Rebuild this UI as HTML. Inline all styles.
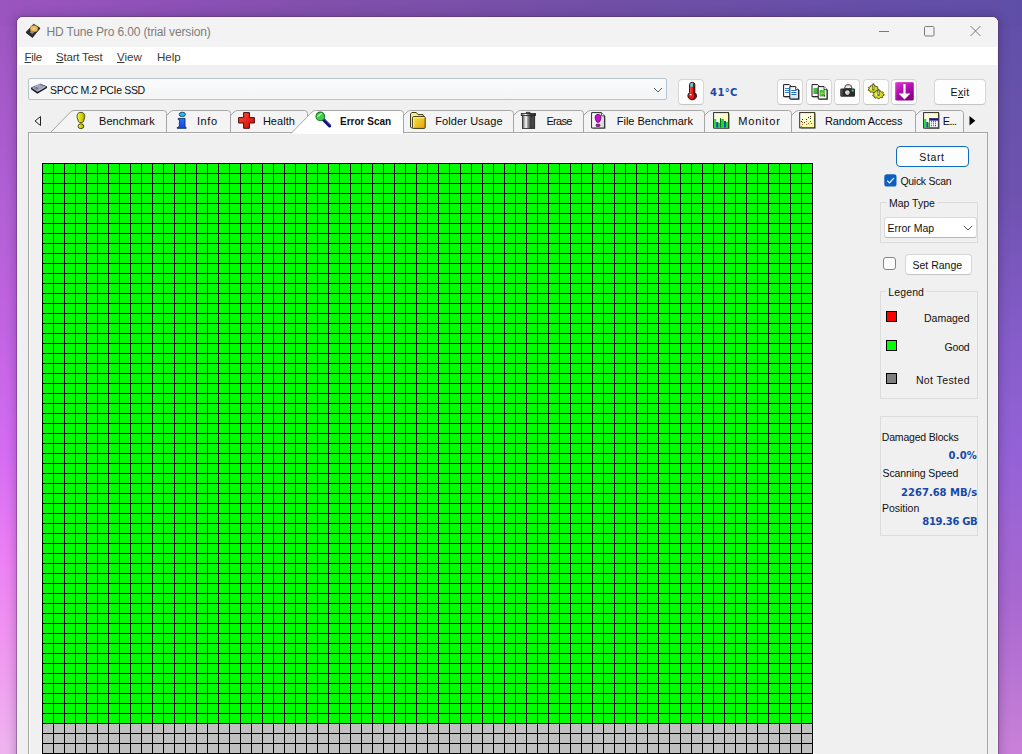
<!DOCTYPE html>
<html lang="en">
<head>
<meta charset="utf-8">
<title>HD Tune Pro 6.00 (trial version)</title>
<style>
html,body{margin:0;padding:0;}
body{width:1022px;height:754px;overflow:hidden;position:relative;font-family:"Liberation Sans",sans-serif;font-size:11px;color:#1a1a1a;
background:#a060c8;}
#bg{position:absolute;left:0;top:0;width:1022px;height:754px;}
.abs{position:absolute;}
.t{position:absolute;white-space:nowrap;line-height:14px;height:14px;}
#win{position:absolute;left:17px;top:17px;width:981px;height:760px;background:#f0f0f0;border-radius:6px 6px 0 0;
box-shadow:0 0 0 1px rgba(70,50,90,.38),0 1px 10px 2px rgba(40,20,70,.28);overflow:hidden;}
#win .in{position:absolute;left:-17px;top:-17px;width:1022px;height:754px;}
#titlebar{left:17px;top:17px;width:981px;height:30px;background:#f3f3f3;}
#menubar{left:17px;top:47px;width:981px;height:18px;background:#ffffff;}
#edge{left:17px;top:17px;width:979px;height:760px;border:1px solid #fbeefd;border-bottom:none;border-radius:6px 6px 0 0;pointer-events:none;}
u{text-decoration:underline;text-underline-offset:1px;}
.btn{position:absolute;background:#fdfdfd;border:1px solid #d6d6d6;border-bottom-color:#c4c4c4;border-radius:4px;box-sizing:border-box;}
.grp{position:absolute;border:1px solid #dcdcdc;box-sizing:border-box;}
.sw{position:absolute;width:11px;height:11px;border:1px solid #000;box-sizing:border-box;}
.blue{color:#1749a8;font-weight:bold;font-family:"DejaVu Sans","Liberation Sans",sans-serif;}
#grid{left:42px;top:163px;width:771px;height:600px;
background:
repeating-linear-gradient(to right,#000 0,#000 1px,transparent 1px,transparent 11px),
repeating-linear-gradient(to bottom,#000 0,#000 1px,transparent 1px,transparent 10px),
linear-gradient(to bottom,#00ff00 0,#00ff00 560px,#c0c0c0 560px,#c0c0c0 100%);}
</style>
</head>
<body>
<svg id="bg" width="1022" height="754" viewBox="0 0 1022 754" preserveAspectRatio="none">
<defs>
<linearGradient id="gl" x1="0" y1="0" x2="0" y2="1">
<stop offset="0" stop-color="#9b55bf"/><stop offset=".252" stop-color="#b05fd3"/><stop offset=".438" stop-color="#c264e2"/><stop offset=".597" stop-color="#d46cf2"/><stop offset=".743" stop-color="#ec80f4"/><stop offset=".875" stop-color="#f09af0"/><stop offset=".992" stop-color="#efb4ef"/>
</linearGradient>
<linearGradient id="gr" x1="0" y1="0" x2="0" y2="1">
<stop offset="0" stop-color="#5f4ea8"/><stop offset=".133" stop-color="#6652ab"/><stop offset=".259" stop-color="#6f52b0"/><stop offset=".438" stop-color="#845cc8"/><stop offset=".603" stop-color="#9462d6"/><stop offset=".796" stop-color="#a868d0"/><stop offset=".99" stop-color="#c880d8"/>
</linearGradient>
<linearGradient id="gtop" x1="0" y1="0" x2="1" y2="0">
<stop offset="0" stop-color="#9b55bf"/><stop offset=".2" stop-color="#8a50b4"/><stop offset=".34" stop-color="#8050aa"/><stop offset=".636" stop-color="#6f4fa6"/><stop offset="1" stop-color="#5f4ea8"/>
</linearGradient>
</defs>
<rect width="1022" height="754" fill="url(#gtop)"/>
<rect x="0" y="0" width="511" height="754" fill="url(#gl)"/>
<rect x="511" y="0" width="511" height="754" fill="url(#gr)"/>
<rect x="0" y="0" width="1022" height="26" fill="url(#gtop)"/>
</svg>

<div id="win"><div class="in">
<div class="abs" id="titlebar"></div>
<div class="abs" id="menubar"></div>
<!--TITLE-->
<svg class="abs" style="left:24px;top:22px" width="18" height="18" viewBox="0 0 18 18">
<path d="M2.2 10.2 L9.6 2.2 L16 6.2 L8.6 15.2 Z" fill="#2b2b2b" stroke="#1a1a1a" stroke-width=".8" stroke-linejoin="round"/>
<path d="M2.2 10.2 L8.6 15.2 L8.7 16 L2.1 11 Z" fill="#111"/>
<path d="M5.6 10.2 L8.4 12.3 L10 10.4 L7.3 8.4 Z" fill="#8a8a8a"/>
<ellipse cx="10" cy="6.7" rx="3.9" ry="3.3" fill="#f0c069" stroke="#a87424" stroke-width=".7"/>
<ellipse cx="10" cy="6.7" rx="1.5" ry="1.1" fill="#fbe7b0" stroke="#c9953f" stroke-width=".4"/>
</svg>
<span class="t" id="t_title" style="left:46.4px;top:25px;font-size:12px;color:#7d7d7d;letter-spacing:-0.14px;">HD Tune Pro 6.00 (trial version)</span>
<svg class="abs" style="left:870px;top:20px" width="120" height="24" viewBox="0 0 120 24" fill="none" stroke="#7a7a7a" stroke-width="1">
<path d="M9 11.5 H19"/>
<rect x="54.5" y="6.5" width="9.5" height="9.5" rx="1.2"/>
<path d="M100.5 6 L110.5 16 M110.5 6 L100.5 16"/>
</svg>
<span class="t" id="t_file" style="left:24.5px;top:50px;font-size:11.5px;color:#3a3a3a;letter-spacing:-0.30px;"><u>F</u>ile</span>
<span class="t" id="t_start" style="left:56.0px;top:50px;font-size:11.5px;color:#3a3a3a;letter-spacing:-0.20px;"><u>S</u>tart Test</span>
<span class="t" id="t_view" style="left:117.0px;top:50px;font-size:11.5px;color:#3a3a3a;"><u>V</u>iew</span>
<span class="t" id="t_help" style="left:157.0px;top:50px;font-size:11.5px;color:#3a3a3a;">Help</span>
<!--TOOLBAR-->
<div class="abs" id="combo" style="left:28px;top:78px;width:639px;height:22px;box-sizing:border-box;border:1px solid #b7c3cf;border-radius:2px;background:linear-gradient(#fafbfc,#f2f4f6);"></div>
<svg class="abs" style="left:28px;top:78px" width="24" height="22" viewBox="28 78 24 22">
<path d="M31 87.9 L40.2 83.9 L47 86.6 L47 87.9 L37.3 93.8 L31 89.3 Z" fill="#17181a"/>
<path d="M31.2 87.8 L40.2 84 L46.8 86.6 L37.4 92.1 Z" fill="#a2a9b1" stroke="#3a3d42" stroke-width=".5"/>
<path d="M33.8 88 L36.6 86.8 L39 88.4 L36.4 89.8 Z" fill="#7674c4"/>
<path d="M39.6 84.8 L41.2 84.2 L44 85.4 L42.4 86.2 Z" fill="#7c7ac6"/>
<path d="M35 86.6 L40 84.5 M38.5 90.8 L45 87" stroke="#cfd4da" stroke-width=".6"/>
</svg>
<span class="t" id="t_drive" style="left:50.1px;top:83px;font-size:10.5px;color:#111;letter-spacing:-0.33px;">SPCC M.2 PCIe SSD</span>
<svg class="abs" style="left:652px;top:85px" width="12" height="10" viewBox="0 0 12 10" fill="none" stroke="#606060" stroke-width="1"><path d="M2 3 L6 7 L10 3"/></svg>

<div class="btn" style="left:678px;top:79px;width:26px;height:26px;"></div>
<svg class="abs" style="left:678px;top:78px" width="28" height="28" viewBox="678 78 28 28">
<path d="M689.6 84.6 a2.6 2.2 0 0 1 5.2 0 V92.6 a4.3 4 0 1 1 -5.2 0 Z" fill="#e01c1c" stroke="#2a0606" stroke-width="1"/>
<path d="M690.1 86.8 V84.6 a2.1 1.8 0 0 1 4.2 0 V86.8 Z" fill="#58ccd4"/>
<path d="M693.2 84 V93.4 a3.6 3.4 0 0 1 -1.4 5.8 a4 3.8 0 0 0 3 -6.4 V84.6 a2 2 0 0 0 -1.6 -1.8 Z" fill="#5e0a0a"/>
<path d="M689.4 95 a1.3 1.3 0 0 1 2 -1 l.2 1.6 Z" fill="#fff" opacity=".9"/>
<path d="M690.8 87.2 V92.6" stroke="#ff7a7a" stroke-width=".8"/>
</svg>
<span class="t blue" id="t_temp" style="left:710.1px;top:86px;font-size:10px;letter-spacing:0.36px;">41°C</span>

<div class="btn" style="left:777px;top:79px;width:26px;height:26px;"></div>
<div class="btn" style="left:806px;top:79px;width:26px;height:26px;"></div>
<div class="btn" style="left:834px;top:79px;width:26px;height:26px;"></div>
<div class="btn" style="left:863px;top:79px;width:26px;height:26px;"></div>
<div class="btn" style="left:891px;top:79px;width:26px;height:26px;"></div>
<div class="btn" style="left:934px;top:79px;width:52px;height:26px;"></div>
<span class="t" id="t_exit" style="left:950.5px;top:85px;font-size:10.5px;color:#111;letter-spacing:0.36px;">E<u>x</u>it</span>
<!--ICONS-->
<svg class="abs" style="left:0;top:0" width="1022" height="110" viewBox="0 0 1022 110">
<defs>
<linearGradient id="gpb" x1="0" y1="0" x2="0" y2="1"><stop offset="0" stop-color="#ffffff"/><stop offset="1" stop-color="#cfe2fa"/></linearGradient>
<linearGradient id="ggr" x1="0" y1="0" x2="1" y2="1"><stop offset="0" stop-color="#3cd24a"/><stop offset="1" stop-color="#5a9a28"/></linearGradient>
</defs>
<!-- copy text -->
<g>
<path d="M784.6 85.6 H790.4 L792.6 87.8 V97.6 H784.6 Z" fill="#222" opacity=".6"/>
<path d="M783.6 84.6 H789.4 L791.6 86.8 V96.6 H783.6 Z" fill="#fdfdfd" stroke="#1a1a1a" stroke-width="1" stroke-linejoin="round"/>
<path d="M785 88.5 H789 M785 90.5 H789 M785 92.5 H789" stroke="#2a8ad8" stroke-width="1"/>
<path d="M790.8 87.6 H796.6 L799.6 90.6 V100 H790.8 Z" fill="#222" opacity=".6"/>
<path d="M789.8 86.6 H795.6 L798.6 89.6 V99 H789.8 Z" fill="url(#gpb)" stroke="#1a1a1a" stroke-width="1" stroke-linejoin="round"/>
<path d="M795.6 86.6 V89.6 H798.6" fill="#fff" stroke="#1a1a1a" stroke-width=".8"/>
<path d="M791.4 90.5 H796.4 M791.4 92.5 H796.4 M791.4 94.5 H796.4" stroke="#1e6ec8" stroke-width="1.1"/>
</g>
<!-- copy image -->
<g transform="translate(28.4 0)">
<path d="M784.6 85.6 H790.4 L792.6 87.8 V97.6 H784.6 Z" fill="#222" opacity=".6"/>
<path d="M783.6 84.6 H789.4 L791.6 86.8 V96.6 H783.6 Z" fill="#fdfdfd" stroke="#1a1a1a" stroke-width="1" stroke-linejoin="round"/>
<rect x="785" y="88" width="4.6" height="6" fill="url(#ggr)"/>
<path d="M790.8 87.6 H796.6 L799.6 90.6 V100 H790.8 Z" fill="#222" opacity=".6"/>
<path d="M789.8 86.6 H795.6 L798.6 89.6 V99 H789.8 Z" fill="#f4f4f4" stroke="#1a1a1a" stroke-width="1" stroke-linejoin="round"/>
<path d="M795.6 86.6 V89.6 H798.6" fill="#fff" stroke="#1a1a1a" stroke-width=".8"/>
<rect x="791.2" y="90" width="5.2" height="6.4" fill="url(#ggr)"/>
<path d="M792.6 94.4 L794 92.6 L795 93.8" stroke="#e8f05a" stroke-width=".9" fill="none"/>
<rect x="795.6" y="95.4" width="1" height="1" fill="#111"/>
</g>
<!-- camera -->
<path d="M844.4 88.6 L845.6 85.6 Q846 84.8 847 84.8 H849.6 Q850.6 84.8 851 85.6 L852 88.6 Z" fill="#e8e8e8" stroke="#2a2a2a" stroke-width=".9"/>
<rect x="840.4" y="88.4" width="14.6" height="8.4" rx="1.2" fill="#2b2b2b"/>
<rect x="840.4" y="89.4" width="2.2" height="6.4" fill="#4a4a4a"/>
<circle cx="847.4" cy="92.6" r="2.9" fill="#1a1a1a"/>
<circle cx="847.4" cy="92.6" r="2.3" fill="#e4e4e4"/>
<circle cx="847.8" cy="93" r="1.2" fill="#c8c8c8"/>
<rect x="851.6" y="89.6" width="2.2" height="2" fill="#2cc860"/>
<!-- gears -->
<g stroke="#4c4c06" stroke-width=".9" stroke-linejoin="round">
<path d="M878.6 89.0 L878.5 89.7 L877.3 90.0 L877.0 90.5 L877.4 91.4 L876.7 91.9 L875.4 91.6 L874.8 91.9 L874.2 92.7 L873.3 92.8 L872.6 92.0 L871.8 91.9 L870.6 92.3 L869.9 91.9 L870.1 91.0 L869.6 90.5 L868.3 90.3 L868.1 89.7 L869.1 89.0 L869.1 88.5 L868.3 87.7 L868.7 87.1 L870.1 87.0 L870.6 86.7 L870.6 85.7 L871.5 85.4 L872.6 86.0 L873.3 86.0 L874.2 85.3 L875.1 85.4 L875.4 86.4 L876.0 86.7 L877.4 86.6 L877.9 87.1 L877.3 88.0 L877.5 88.5 Z" fill="#d6dc1e"/>
<path d="M884.2 94.6 L884.1 95.3 L882.8 95.7 L882.4 96.3 L882.8 97.3 L882.1 97.8 L880.7 97.5 L880.0 97.8 L879.4 98.7 L878.4 98.8 L877.6 97.9 L876.8 97.8 L875.5 98.2 L874.7 97.8 L874.8 96.8 L874.4 96.3 L872.9 96.0 L872.7 95.3 L873.8 94.6 L873.8 94.0 L872.9 93.2 L873.4 92.5 L874.8 92.4 L875.4 92.0 L875.5 91.0 L876.4 90.7 L877.6 91.3 L878.4 91.2 L879.4 90.5 L880.4 90.7 L880.7 91.7 L881.4 92.0 L882.8 91.9 L883.4 92.5 L882.8 93.5 L883.0 94.0 Z" fill="#d6dc1e"/>
</g>
<ellipse cx="872.4" cy="88.4" rx="2.6" ry="1.6" fill="#eef25a" opacity=".8"/>
<ellipse cx="877.4" cy="94" rx="2.8" ry="1.7" fill="#eef25a" opacity=".8"/>
<path d="M873.3 84.4 V89.6" stroke="#55553a" stroke-width="2.2" stroke-linecap="round"/>
<path d="M873.3 84.8 V89.2" stroke="#ecece0" stroke-width=".8"/>
<path d="M878.6 90.2 V95" stroke="#55553a" stroke-width="2.2" stroke-linecap="round"/>
<path d="M878.6 90.6 V94.6" stroke="#ecece0" stroke-width=".8"/>
<!-- download arrow -->
<rect x="895.2" y="82" width="18.6" height="18.6" rx="1.6" fill="url(#gm)"/>
<path d="M895.8 100 V82.6 H913.2" fill="none" stroke="#e46ae0" stroke-width=".8" opacity=".7"/>
<path d="M903.4 84 H905.6 V93.4 H910.4 L904.5 99.4 L898.6 93.4 H903.4 Z" fill="#ffffff"/>
</svg>
<!--TABS-->
<svg class="abs" style="left:0;top:0" width="1022" height="754" viewBox="0 0 1022 754">
<path d="M899.0 132.5 L919.0 112.0 Q920.5 110.5 922.5 110.5 H960.5 Q963.5 110.5 963.5 113.5 V132.5" fill="#f4f4f4" stroke="#a6a6a6" stroke-width="1"/>
<path d="M775.0 132.5 L795.0 112.0 Q796.5 110.5 798.5 110.5 H912.5 Q915.5 110.5 915.5 113.5 V132.5" fill="#f4f4f4" stroke="#a6a6a6" stroke-width="1"/>
<path d="M688.0 132.5 L708.0 112.0 Q709.5 110.5 711.5 110.5 H788.5 Q791.5 110.5 791.5 113.5 V132.5" fill="#f4f4f4" stroke="#a6a6a6" stroke-width="1"/>
<path d="M567.0 132.5 L587.0 112.0 Q588.5 110.5 590.5 110.5 H701.5 Q704.5 110.5 704.5 113.5 V132.5" fill="#f4f4f4" stroke="#a6a6a6" stroke-width="1"/>
<path d="M497.0 132.5 L517.0 112.0 Q518.5 110.5 520.5 110.5 H580.5 Q583.5 110.5 583.5 113.5 V132.5" fill="#f4f4f4" stroke="#a6a6a6" stroke-width="1"/>
<path d="M387.0 132.5 L407.0 112.0 Q408.5 110.5 410.5 110.5 H510.5 Q513.5 110.5 513.5 113.5 V132.5" fill="#f4f4f4" stroke="#a6a6a6" stroke-width="1"/>
<path d="M214.0 132.5 L234.0 112.0 Q235.5 110.5 237.5 110.5 H304.5 Q307.5 110.5 307.5 113.5 V132.5" fill="#f4f4f4" stroke="#a6a6a6" stroke-width="1"/>
<path d="M150.0 132.5 L170.0 112.0 Q171.5 110.5 173.5 110.5 H227.5 Q230.5 110.5 230.5 113.5 V132.5" fill="#f4f4f4" stroke="#a6a6a6" stroke-width="1"/>
<path d="M50.5 132.5 L70.5 112.0 Q72.0 110.5 74.0 110.5 H163.5 Q166.5 110.5 166.5 113.5 V132.5" fill="#f4f4f4" stroke="#a6a6a6" stroke-width="1"/>
<rect x="28.5" y="132.5" width="959" height="640" fill="#f0f0f0" stroke="#a6a6a6"/>
<path d="M29.5 760 V133.5 H987" fill="none" stroke="#fafafa"/>
<path d="M291.0 133.5 L312.0 112.0 Q313.5 110.5 315.5 110.5 H400.5 Q403.5 110.5 403.5 113.5 V133.5 Z" fill="#ffffff" stroke="none"/>
<path d="M291.0 133.5 L312.0 112.0 Q313.5 110.5 315.5 110.5 H400.5 Q403.5 110.5 403.5 113.5 V133.5" fill="none" stroke="#a6a6a6"/>
<path d="M40.5 116.5 V125.5 L35 121 Z" fill="none" stroke="#222" stroke-width="1"/>
<path d="M969.5 116 L975.3 120.7 L969.5 125.5 Z" fill="#000"/>
</svg>
<!--TABTEXT-->
<span class="t" id="t_bench" style="left:99.1px;top:114px;font-size:11px;color:#0c0c0c;">Benchmark</span>
<span class="t" id="t_info" style="left:196.9px;top:114px;font-size:11px;color:#0c0c0c;letter-spacing:0.60px;">Info</span>
<span class="t" id="t_health" style="left:262.9px;top:114px;font-size:11px;color:#0c0c0c;letter-spacing:0.04px;">Health</span>
<span class="t" id="t_err" style="left:340.0px;top:115px;font-size:10px;color:#111;font-weight:bold;">Error Scan</span>
<span class="t" id="t_folder" style="left:435.2px;top:114px;font-size:11px;color:#0c0c0c;letter-spacing:0.12px;">Folder Usage</span>
<span class="t" id="t_erase" style="left:546.5px;top:114px;font-size:11px;color:#0c0c0c;letter-spacing:-0.72px;">Erase</span>
<span class="t" id="t_fileb" style="left:616.8px;top:114px;font-size:11px;color:#0c0c0c;letter-spacing:-0.02px;">File Benchmark</span>
<span class="t" id="t_mon" style="left:738.2px;top:114px;font-size:11px;color:#0c0c0c;letter-spacing:0.83px;">Monitor</span>
<span class="t" id="t_rand" style="left:825.1px;top:114px;font-size:11px;color:#0c0c0c;letter-spacing:-0.18px;">Random Access</span>
<span class="t" id="t_extra" style="left:942.8px;top:114px;font-size:11px;color:#0c0c0c;letter-spacing:-0.75px;">E...</span>
<!--TABICONS-->
<svg class="abs" style="left:0;top:0" width="1022" height="140" viewBox="0 0 1022 140">
<defs>
<linearGradient id="gy" x1="0" y1="0" x2="1" y2="0"><stop offset="0" stop-color="#f4f45a"/><stop offset=".45" stop-color="#dcdc10"/><stop offset="1" stop-color="#a8a800"/></linearGradient>
<linearGradient id="gb" x1="0" y1="0" x2="0" y2="1"><stop offset="0" stop-color="#1c78f0"/><stop offset="1" stop-color="#1c3ce6"/></linearGradient>
<linearGradient id="grd" x1="0" y1="0" x2="1" y2="1"><stop offset="0" stop-color="#ff5a50"/><stop offset=".5" stop-color="#e82418"/><stop offset="1" stop-color="#d01010"/></linearGradient>
<linearGradient id="gf" x1="0" y1="0" x2="1" y2="1"><stop offset="0" stop-color="#f8e23c"/><stop offset="1" stop-color="#e2a410"/></linearGradient>
<linearGradient id="gt" x1="0" y1="0" x2="1" y2="0"><stop offset="0" stop-color="#5a5a5a"/><stop offset=".12" stop-color="#9a9a9a"/><stop offset=".3" stop-color="#ffffff"/><stop offset=".42" stop-color="#a0a0a0"/><stop offset=".58" stop-color="#5c5c5c"/><stop offset=".7" stop-color="#2e2e2e"/><stop offset=".85" stop-color="#4a4a4a"/><stop offset="1" stop-color="#222"/></linearGradient>
<linearGradient id="gp" x1="0" y1="0" x2="1" y2="1"><stop offset="0" stop-color="#ffffff"/><stop offset="1" stop-color="#fdfd8c"/></linearGradient>
<linearGradient id="gpg" x1="0" y1="0" x2="1" y2="0"><stop offset="0" stop-color="#ffffff"/><stop offset="1" stop-color="#d4d4d4"/></linearGradient>
<linearGradient id="gm" x1="0" y1="0" x2=".55" y2="1"><stop offset="0" stop-color="#d83ad0"/><stop offset=".5" stop-color="#b410b0"/><stop offset="1" stop-color="#8a0088"/></linearGradient>
</defs>
<!-- benchmark: yellow exclamation -->
<path d="M80.9 112.4 C84.3 112.4 85 114.8 84.6 117.6 L83.3 121.8 C83 122.9 78.9 122.9 78.6 121.8 L77.2 117.6 C76.8 114.8 77.5 112.4 80.9 112.4 Z" fill="url(#gy)" stroke="#3c3c08" stroke-width=".9"/>
<ellipse cx="80.9" cy="126.2" rx="2.9" ry="2.4" fill="url(#gy)" stroke="#3c3c08" stroke-width=".9"/>
<!-- info -->
<ellipse cx="182.3" cy="114.4" rx="3.1" ry="2.2" fill="#34b4f2" stroke="#0c4a5e" stroke-width=".9"/>
<path d="M178.2 118.4 H185 V126.6 L186.2 127.6 V128.3 H177.2 V127.6 L179.4 126.4 V119.8 L178.2 119.4 Z" fill="url(#gb)" stroke="#0e2e66" stroke-width=".9" stroke-linejoin="round"/>
<!-- health: red cross -->
<path d="M243.6 112.6 H249.4 V117.6 H254.4 V123 H249.4 V128.3 H243.6 V123 H238.6 V117.6 H243.6 Z" fill="url(#grd)" stroke="#4a0c0c" stroke-width="1" stroke-linejoin="round"/>
<!-- error scan: magnifier -->
<path d="M323.6 119.8 L329.6 125.8" stroke="#12127e" stroke-width="3.3" stroke-linecap="round"/>
<path d="M324.6 119.4 L330.2 125" stroke="#4848c8" stroke-width=".8" stroke-linecap="round"/>
<circle cx="320.3" cy="116.4" r="4.3" fill="#3cd048" stroke="#1c7a28" stroke-width="1.1"/>
<path d="M317.8 116.6 L321.4 113.4" stroke="#b4f4b8" stroke-width="1.3" stroke-linecap="round"/>
<!-- folder -->
<path d="M410.5 127.2 V114 L411.8 112.5 H416.2 L418 114.6 H423 L423.4 116 V117" fill="#f8f080" stroke="#38381c" stroke-width="1" stroke-linejoin="round"/>
<path d="M410.5 127.2 L412.6 128.4" stroke="#38381c" stroke-width="1"/>
<rect x="412.6" y="116.6" width="12.6" height="11.8" rx="1" fill="url(#gf)" stroke="#38381c" stroke-width="1"/>
<path d="M413.7 127.6 V117.7 H424.4" fill="none" stroke="#fdf6b4" stroke-width="1"/>
<!-- trash -->
<rect x="526.2" y="112.2" width="3.8" height="1.8" fill="#6a6a6a" stroke="#222" stroke-width=".6"/>
<rect x="522.4" y="115" width="12.3" height="13.4" fill="url(#gt)" stroke="#222" stroke-width=".8"/>
<rect x="521.3" y="113.4" width="14.2" height="2.2" fill="url(#gt)" stroke="#222" stroke-width=".8"/>
<path d="M531 117 V127.5 M533 117 V127.5" stroke="#555" stroke-width=".6"/>
<!-- file benchmark -->
<path d="M592.6 113.6 H602.4 L605.6 116.8 V129 H592.6 Z" fill="#555" opacity=".55"/>
<path d="M591.6 112.6 H601.4 L604.6 115.8 V128 H591.6 Z" fill="url(#gpg)" stroke="#2c2c2c" stroke-width="1" stroke-linejoin="round"/>
<path d="M601.4 112.6 V115.8 H604.6" fill="#fff" stroke="#2c2c2c" stroke-width=".8"/>
<path d="M598 114.4 C600.6 114.4 601.2 116.6 600.8 118.6 L599.8 121.6 C599.4 122.6 596.6 122.6 596.3 121.6 L595.2 118.6 C594.8 116.6 595.4 114.4 598 114.4 Z" fill="#d808d4" stroke="#4a0a56" stroke-width=".8"/>
<rect x="596" y="124.2" width="4" height="2.2" rx=".8" fill="#c010bc" stroke="#4a0a56" stroke-width=".7"/>
<!-- monitor -->
<rect x="714.6" y="113.6" width="15" height="15.4" fill="#444" opacity=".55"/>
<rect x="713.6" y="112.6" width="15" height="15.4" fill="url(#gp)" stroke="#2a2a1c" stroke-width="1"/>
<path d="M714.1 127.5 V119 H716.2 V122 H718.2 V123 H720 V118.4 H721 V119 H724 V121 H726 V122 H728.1 V127.5 Z" fill="#16e028"/>
<rect x="716.2" y="122" width="2" height="5.5" fill="#2248c8"/>
<rect x="720" y="118.2" width="1" height="9.3" fill="#0a6a2a"/>
<rect x="724" y="121" width="2" height="6.5" fill="#2248c8"/>
<!-- random access -->
<rect x="800.7" y="113.6" width="15" height="15.2" fill="#444" opacity=".55"/>
<rect x="799.7" y="112.6" width="15" height="15.2" fill="url(#gp)" stroke="#2a2a1c" stroke-width="1"/>
<g fill="#20203c"><rect x="802" y="119" width="1" height="1"/><rect x="801" y="121" width="1" height="1"/><rect x="804" y="122" width="1" height="1"/><rect x="806" y="119" width="1" height="1"/><rect x="808" y="117" width="1" height="1"/><rect x="810" y="116" width="1" height="1"/><rect x="810" y="118" width="1" height="1"/></g>
<g fill="#c4600c"><rect x="802" y="122" width="1" height="1"/><rect x="802" y="124" width="1" height="1"/><rect x="806" y="121" width="1" height="1"/><rect x="806" y="124" width="1" height="1"/><rect x="808" y="123" width="1" height="1"/><rect x="810" y="121" width="1" height="1"/><rect x="811" y="123" width="1" height="1"/><rect x="801" y="126" width="1" height="1"/></g>
<!-- extra tests -->
<rect x="924.6" y="113.6" width="15" height="15.4" fill="#444" opacity=".55"/>
<rect x="923.6" y="112.6" width="15" height="15.4" fill="url(#gp)" stroke="#2a2a1c" stroke-width="1"/>
<rect x="924.1" y="119" width="2.2" height="8.5" fill="#16e028"/>
<rect x="926.3" y="122" width="2" height="5.5" fill="#2248c8"/>
<rect x="928.3" y="123" width="1.2" height="4.5" fill="#16c028"/>
<rect x="929.6" y="118.4" width="8.6" height="9.2" fill="#fbf4f8" stroke="#30304a" stroke-width=".6"/>
<rect x="929.6" y="118.4" width="8.6" height="2.2" fill="#14109c"/>
<g fill="#a02838"><rect x="931" y="121.2" width="1" height="1"/><rect x="935" y="121.2" width="1" height="1"/><rect x="933" y="123.2" width="1" height="1"/><rect x="935" y="123.2" width="1" height="1"/><rect x="931" y="125.2" width="1" height="1"/><rect x="933" y="125.2" width="1" height="1"/></g>
<g fill="#1c1c5c"><rect x="933" y="121.2" width="1" height="1"/><rect x="935" y="125.2" width="1" height="1"/></g>
<rect x="931" y="123.2" width="1" height="1" fill="#5a8a3a"/>
</svg>
<!--PANEL-->
<div class="abs" id="grid"></div>
<div class="abs" style="left:41px;top:162px;width:773px;height:1px;background:#f9f9f9;"></div>
<div class="abs" style="left:813px;top:162px;width:1px;height:600px;background:#f9f9f9;"></div>
<div class="abs" style="left:41px;top:162px;width:1px;height:600px;background:#f9f9f9;"></div>

<div class="abs" style="left:896px;top:146px;width:73px;height:21px;box-sizing:border-box;border:1.5px solid #0f6cbd;border-radius:4px;background:#fdfdfd;"></div>
<span class="t" id="t_startbtn" style="left:919.3px;top:150px;font-size:10.5px;color:#111;letter-spacing:0.62px;">Start</span>

<svg class="abs" style="left:884px;top:174px" width="13" height="13" viewBox="0 0 13 13"><rect x=".3" y=".3" width="12.2" height="12.2" rx="2.6" fill="#0f5fbf"/><path d="M3.2 6.6 L5.5 8.9 L9.8 4.2" fill="none" stroke="#fff" stroke-width="1.2"/></svg>
<span class="t" id="t_quick" style="left:900.4px;top:174px;font-size:10.5px;color:#111;letter-spacing:-0.28px;">Quick Scan</span>

<div class="grp" style="left:880px;top:202px;width:98px;height:41px;"></div>
<span class="t" id="t_maptype" style="left:886.9px;top:196px;font-size:10.5px;color:#111;background:#f0f0f0;padding:0 2px;">Map Type</span>
<div class="abs" style="left:884px;top:217px;width:93px;height:21px;box-sizing:border-box;border:1px solid #d9d9d9;border-bottom-color:#b8b8b8;border-radius:3px;background:#fff;"></div>
<span class="t" id="t_errmap" style="left:887.5px;top:221px;font-size:10.5px;color:#111;">Error Map</span>
<svg class="abs" style="left:962px;top:223px" width="12" height="10" viewBox="0 0 12 10" fill="none" stroke="#555" stroke-width="1"><path d="M1.8 2.8 L6 7 L10.2 2.8"/></svg>

<div class="abs" style="left:883px;top:257px;width:13px;height:13px;box-sizing:border-box;border:1px solid #868686;border-radius:3px;background:#fdfdfd;"></div>
<div class="btn" style="left:905px;top:254px;width:67px;height:21px;"></div>
<span class="t" id="t_setrange" style="left:912.5px;top:258px;font-size:10.5px;color:#111;">Set Range</span>

<div class="grp" style="left:880px;top:291px;width:98px;height:108px;"></div>
<span class="t" id="t_legend" style="left:886.3px;top:285px;font-size:10.5px;color:#111;background:#f0f0f0;padding:0 2px;letter-spacing:0.12px;">Legend</span>
<div class="sw" style="left:886px;top:311px;background:#ff0000;"></div>
<div class="sw" style="left:886px;top:340px;background:#00ff00;"></div>
<div class="sw" style="left:886px;top:373px;background:#808080;"></div>
<span class="t" id="t_damaged" style="left:924.0px;top:311px;font-size:10.5px;color:#111;">Damaged</span>
<span class="t" id="t_good" style="left:944.6px;top:340px;font-size:10.5px;color:#111;letter-spacing:-0.21px;">Good</span>
<span class="t" id="t_nottested" style="left:915.9px;top:373px;font-size:10.5px;color:#111;letter-spacing:0.40px;">Not Tested</span>

<div class="grp" style="left:880px;top:416px;width:98px;height:120px;"></div>
<span class="t" id="t_dblocks" style="left:881.8px;top:430px;font-size:10.5px;color:#111;letter-spacing:-0.19px;">Damaged Blocks</span>
<span class="t blue" id="t_pct" style="left:948.6px;top:449px;font-size:10px;letter-spacing:0.18px;">0.0%</span>
<span class="t" id="t_sspeed" style="left:882.5px;top:466px;font-size:10.5px;color:#111;letter-spacing:-0.10px;">Scanning Speed</span>
<span class="t blue" id="t_speed" style="left:901.1px;top:486px;font-size:10px;letter-spacing:-0.01px;">2267.68 MB/s</span>
<span class="t" id="t_position" style="left:881.9px;top:501px;font-size:10.5px;color:#111;">Position</span>
<span class="t blue" id="t_pos" style="left:922.3px;top:515px;font-size:10px;letter-spacing:-0.31px;">819.36 GB</span>
</div></div>
<div class="abs" id="edge"></div>
</body>
</html>
